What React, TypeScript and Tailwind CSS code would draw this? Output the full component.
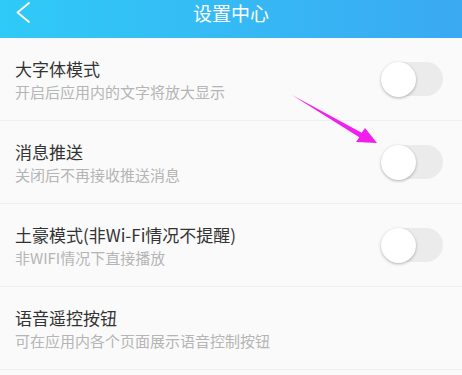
const ROWS = [
    { title: '大字体模式', desc: '开启后应用内的文字将放大显示', toggle: true },
    { title: '消息推送', desc: '关闭后不再接收推送消息', toggle: true },
    { title: '土豪模式(非Wi-Fi情况不提醒)', desc: '非WIFI情况下直接播放', toggle: true },
    { title: '语音遥控按钮', desc: '可在应用内各个页面展示语音控制按钮', toggle: false },
];

function Toggle() {
    return (
        <div className="relative w-[61px] h-[34px] rounded-full bg-[#ebebeb]">
            <div className="absolute -left-px top-0 w-[35px] h-[35px] rounded-full bg-white shadow-[0_1px_3px_rgba(0,0,0,0.3)]" />
        </div>
    );
}

export default function App() {
    return (
        <div
            className="relative w-[462px] h-[375px] overflow-hidden bg-[#fafafa]"
            style={{ fontFamily: '"Noto Sans CJK SC", "Noto Sans", sans-serif' }}
        >
            {/* Header */}
            <div className="relative flex justify-center h-[38px] bg-gradient-to-r from-[#2fcaf7] to-[#3aa9f2]">
                <svg className="absolute left-0 top-0" width="40" height="30" viewBox="0 0 40 30">
                    <polyline points="29,3 17.5,12.5 29,22" fill="none" stroke="white" strokeWidth="1.8" strokeLinecap="round" strokeLinejoin="round" />
                </svg>
                <span className="pt-[1px] text-[19px] leading-[24px] text-white">设置中心</span>
            </div>

            {/* Setting rows */}
            {ROWS.map((row, i) => (
                <div
                    key={i}
                    className="flex items-center justify-between h-[83px] pl-[15px] pr-[19px] border-b border-[#f0f0f0]"
                >
                    <div className="flex flex-col gap-[2px] pt-[1px]">
                        <span className="text-[17px] leading-[22px] text-[#333]">{row.title}</span>
                        <span className="text-[15px] leading-[20px] text-[#b5b5b5]">{row.desc}</span>
                    </div>
                    {row.toggle && <Toggle />}
                </div>
            ))}

            {/* Annotation arrow */}
            <svg className="absolute left-0 top-0 pointer-events-none" width="462" height="375" viewBox="0 0 462 375">
                <polygon
                    points="292,95 361.7,132.8 365,128 377,143 356,142 359.3,137.2"
                    fill="#f21ef0"
                />
            </svg>
        </div>
    );
}
